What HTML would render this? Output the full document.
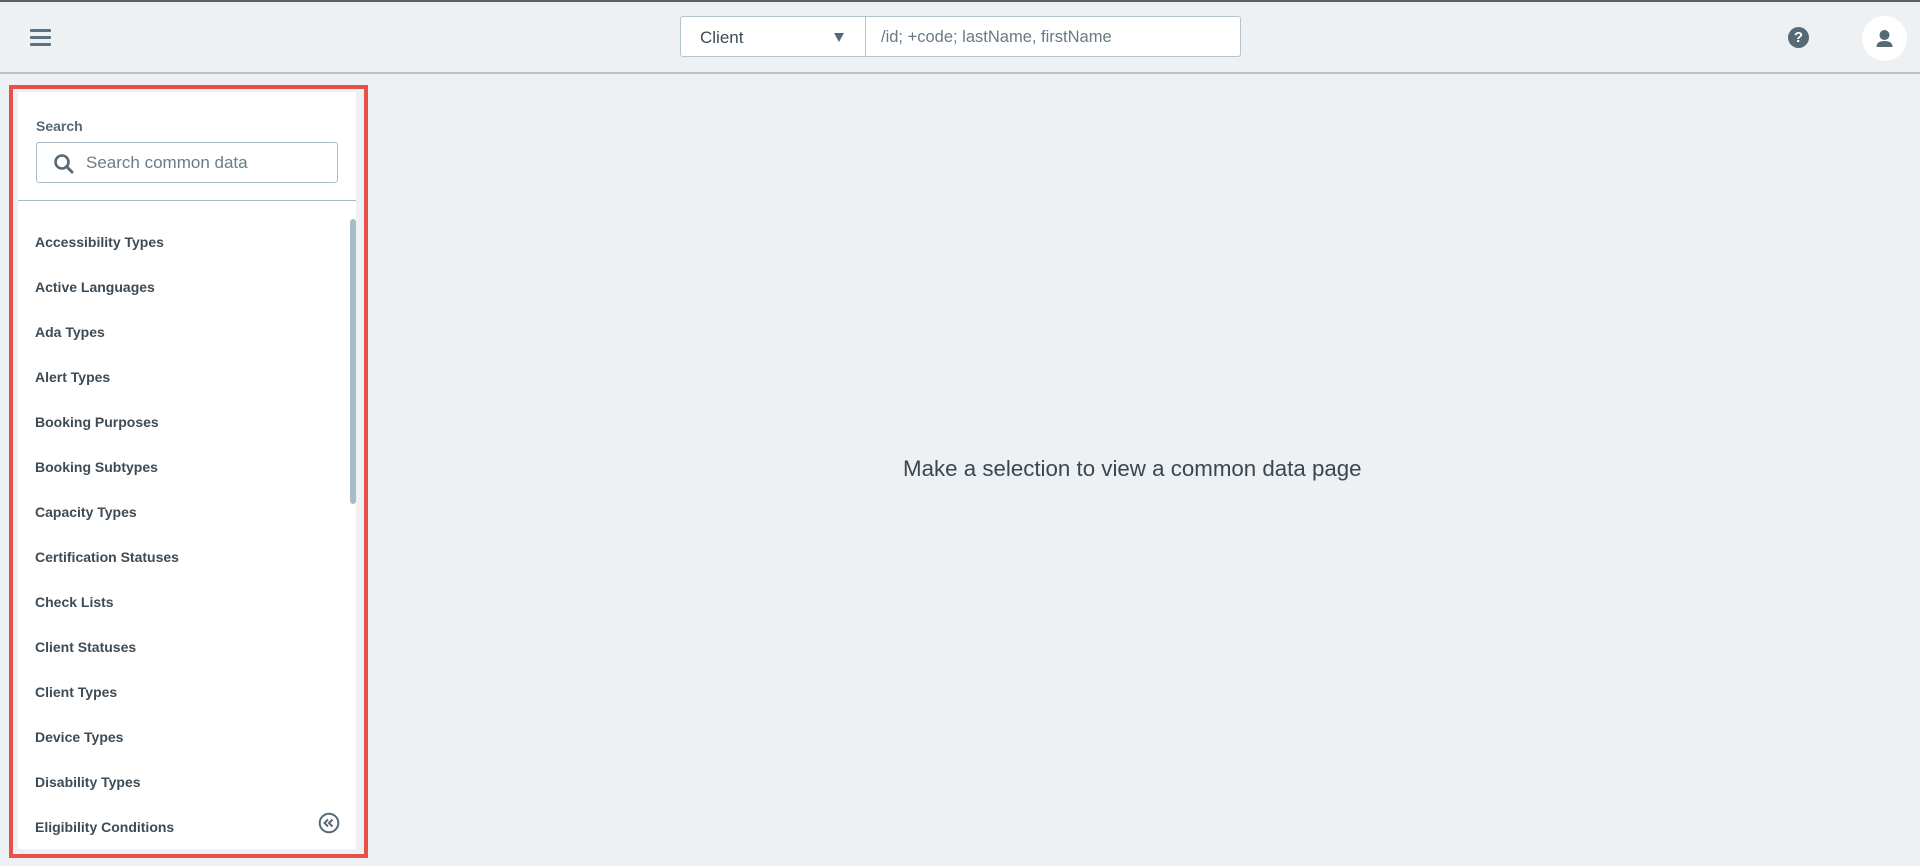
<!DOCTYPE html>
<html><head><meta charset="utf-8"><style>
*{box-sizing:border-box;margin:0;padding:0}
body{width:1920px;height:866px;background:#edf1f4;font-family:"Liberation Sans",sans-serif;position:relative;overflow:hidden}
.top{position:absolute;left:0;top:0;width:1920px;height:2px;background:#5b6167}
.hdr{position:absolute;left:0;top:72px;width:1920px;height:2px;background:#b6c4cd}
.burger{position:absolute;left:30px;top:29px;width:21px}
.burger i{display:block;height:2.5px;background:#5d7280;margin-bottom:4.5px;border-radius:1px}
.sel{position:absolute;left:680px;top:16px;width:561px;height:41px;background:#fff;border:1px solid #b3c4cd;border-radius:3px}
.sel .a{position:absolute;left:19px;top:11px;font-size:17px;color:#3f4a52}
.sel .tri{position:absolute;left:153px;top:16px;width:0;height:0;border-left:5.5px solid transparent;border-right:5.5px solid transparent;border-top:9px solid #566a76}
.sel .div{position:absolute;left:184px;top:0;width:1px;height:39px;background:#b3c4cd}
.sel .b{position:absolute;left:200px;top:11px;font-size:16.5px;color:#6a7a84}
.help{position:absolute;left:1788px;top:27px;width:21px;height:21px;border-radius:50%;background:#566a76;color:#fff;font-size:15px;font-weight:bold;text-align:center;line-height:21px}
.av{position:absolute;left:1862px;top:16px;width:45px;height:45px;border-radius:50%;background:#fff}
.red{position:absolute;left:9px;top:85px;width:359px;height:773px;border:4px solid #e8504a}
.panel{position:absolute;left:18px;top:92px;width:338px;height:757px;background:#fff}
.lbl{position:absolute;left:36px;top:118px;font-size:14px;color:#566a76;font-weight:bold}
.inp{position:absolute;left:36px;top:142px;width:302px;height:41px;border:1px solid #a9bcc6;border-radius:3px;background:#fff}
.inp span{position:absolute;left:49px;top:10px;font-size:17px;color:#6b7c86}
.inp svg{position:absolute;left:16px;top:10px}
.hr{position:absolute;left:18px;top:200px;width:338px;height:1px;background:#a8bcc6}
.sb{position:absolute;left:350px;top:219px;width:6px;height:285px;background:#a6bcc7;border-radius:3px}
.it{position:absolute;left:35px;font-size:14px;font-weight:bold;color:#3e4b55}
.col{position:absolute;left:318px;top:812px}
.msg{position:absolute;left:903px;top:456px;font-size:22.3px;color:#3b4750}
</style></head><body>
<div class="top"></div><div class="hdr"></div>
<div class="burger"><i></i><i></i><i></i></div>
<div class="sel"><span class="a">Client</span><span class="tri"></span><span class="div"></span><span class="b">/id; +code; lastName, firstName</span></div>
<div class="help">?</div>
<div class="av"><svg width="45" height="45" viewBox="0 0 45 45"><circle cx="22.5" cy="19" r="5" fill="#566a76"/><path d="M14.5 31 q0-6 8-6 q8 0 8 6 z" fill="#566a76"/></svg></div>
<div class="red"></div>
<div class="panel"></div>
<div class="lbl">Search</div>
<div class="inp"><svg width="22" height="22" viewBox="0 0 22 22"><circle cx="9" cy="9" r="6.5" stroke="#566a76" stroke-width="2.6" fill="none"/><path d="M13.5 13.5 L19 19" stroke="#566a76" stroke-width="3" stroke-linecap="round"/></svg><span>Search common data</span></div>
<div class="hr"></div>
<div class="sb"></div>
<div class="it" style="top:234px">Accessibility Types</div>
<div class="it" style="top:279px">Active Languages</div>
<div class="it" style="top:324px">Ada Types</div>
<div class="it" style="top:369px">Alert Types</div>
<div class="it" style="top:414px">Booking Purposes</div>
<div class="it" style="top:459px">Booking Subtypes</div>
<div class="it" style="top:504px">Capacity Types</div>
<div class="it" style="top:549px">Certification Statuses</div>
<div class="it" style="top:594px">Check Lists</div>
<div class="it" style="top:639px">Client Statuses</div>
<div class="it" style="top:684px">Client Types</div>
<div class="it" style="top:729px">Device Types</div>
<div class="it" style="top:774px">Disability Types</div>
<div class="it" style="top:819px">Eligibility Conditions</div>
<svg class="col" width="22" height="22" viewBox="0 0 22 22"><circle cx="11" cy="11" r="9.3" stroke="#566a76" stroke-width="2" fill="none"/><path d="M10 7.5 L6.5 11 L10 14.5 M14.5 7.5 L11 11 L14.5 14.5" stroke="#566a76" stroke-width="2" fill="none"/></svg>
<div class="msg">Make a selection to view a common data page</div>
</body></html>
